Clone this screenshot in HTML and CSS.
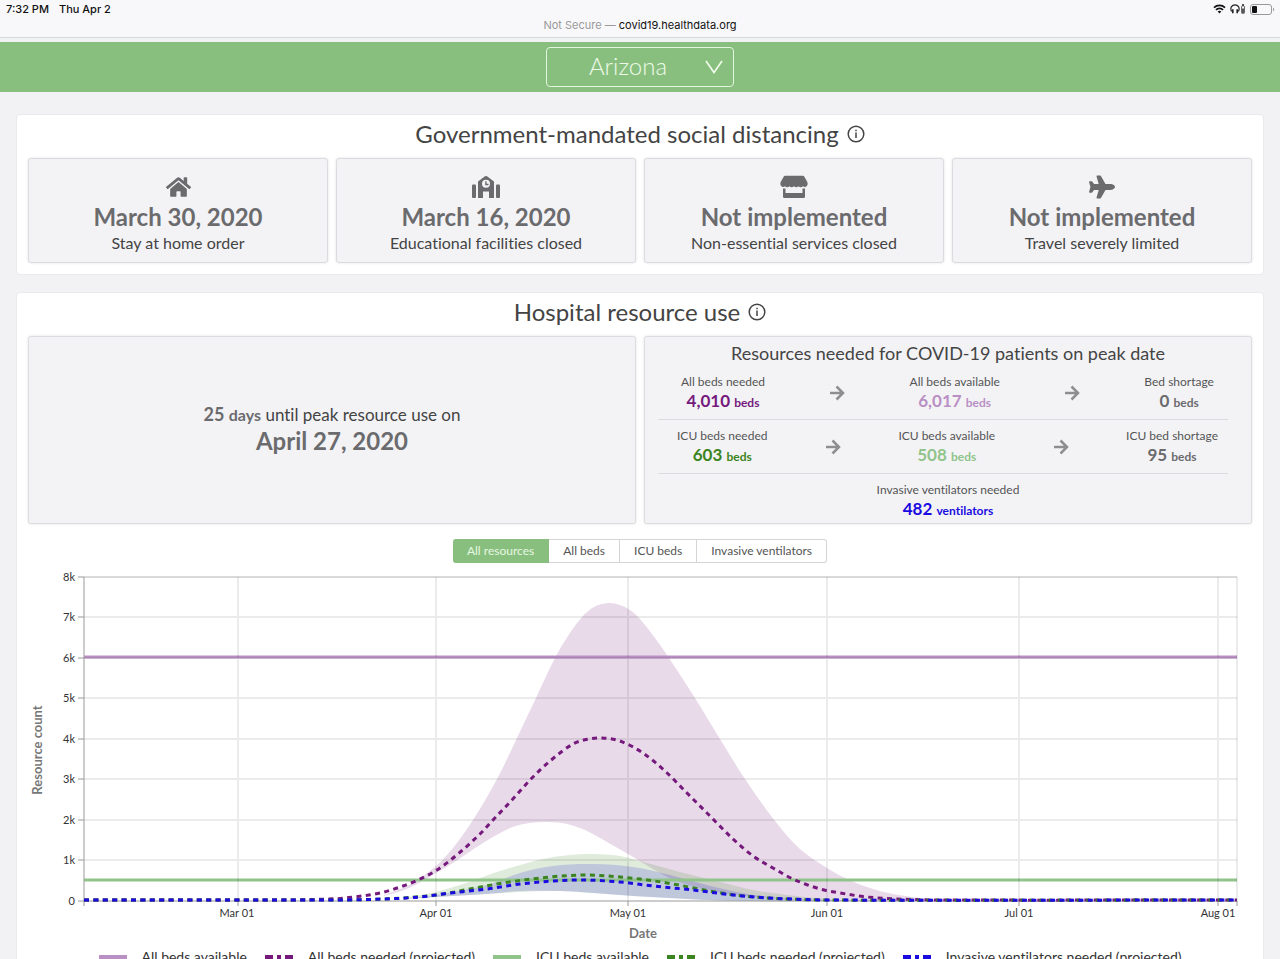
FILE: index.html
```
<!DOCTYPE html>
<html lang="en">
<head>
  <meta charset="UTF-8">
  <meta name="viewport" content="width=device-width, initial-scale=1.0">
  <title>COVID-19 Projections</title>
  <link rel="stylesheet" href="styles.css">
</head>
<body>

  <!-- Status bar -->
  <div class="status">
    <div class="status-row">
      <div class="clock"><span>7:32 PM</span><span>Thu Apr 2</span></div>
      <div class="status-icons">
        <svg width="13" height="10" viewBox="0 0 13 10" fill="none" stroke="#111" stroke-width="1.8">
          <path d="M1 3.6a8 8 0 0 1 11 0M3 5.9a5 5 0 0 1 7 0"/>
          <path d="M4.7 7.6a2.6 2.6 0 0 1 3.6 0L6.5 9.6z" fill="#111" stroke="none"/>
        </svg>
        <svg width="16" height="10" viewBox="0 0 16 10" fill="none" stroke="#222">
          <path d="M1.6 7.5C-.4 3.5 2.2 .8 5 .8s5.4 2.7 3.4 6.7" stroke-width="1.2"/>
          <path d="M2.8 5.2v4M7.2 5.2v4" stroke-width="1.6"/>
          <rect x="11.5" y="2" width="3" height="7.5" rx=".8" stroke="#666"/>
          <path d="M13 4.5v4.5M12 1h2" stroke-width="1.5"/>
        </svg>
        <svg width="25" height="11" viewBox="0 0 25 11">
          <rect x=".5" y=".5" width="21" height="10" rx="2.5" fill="none" stroke="#999"/>
          <rect x="2" y="2" width="5" height="7" rx="1" fill="#111"/>
          <path d="M23 3.5c1.5.6 1.5 3.4 0 4z" fill="#999"/>
        </svg>
      </div>
    </div>
    <div class="address"><span>Not Secure —</span> covid19.healthdata.org</div>
  </div>

  <!-- Location picker -->
  <header class="location-bar">
    <div class="location">
      <select aria-label="Location">
        <option>Arizona</option>
      </select>
      <svg class="chevron" width="18" height="14" viewBox="0 0 18 14" fill="none" stroke="#eefbea" stroke-width="1.7">
        <path d="M1 1l8 11.5L17 1"/>
      </svg>
    </div>
  </header>

  <main>
    <section class="panel">
      <h2>Government-mandated social distancing
        <svg class="info" viewBox="0 0 18 18" fill="none" stroke="#444" stroke-width="1.5">
          <circle cx="9" cy="9" r="7.8"/><path d="M9 7.6v5.4M9 4.7v1.6"/>
        </svg>
      </h2>
      <div class="measures">
        <div class="card measure">
          <svg width="25" height="24" viewBox="0 0 576 512"><path d="M280.37 148.26L96 300.11V464a16 16 0 0 0 16 16l112.06-.29a16 16 0 0 0 15.92-16V368a16 16 0 0 1 16-16h64a16 16 0 0 1 16 16v95.64a16 16 0 0 0 16 16.05L464 480a16 16 0 0 0 16-16V300L295.67 148.26a12.19 12.19 0 0 0-15.3 0zM571.6 251.47L488 182.56V44.05a12 12 0 0 0-12-12h-56a12 12 0 0 0-12 12v72.61L318.47 43a48 48 0 0 0-61 0L4.34 251.47a12 12 0 0 0-1.6 16.9l25.5 31A12 12 0 0 0 45.15 301l235.22-193.74a12.19 12.19 0 0 1 15.3 0L530.9 301a12 12 0 0 0 16.9-1.6l25.5-31a12 12 0 0 0-1.7-16.93z"/></svg>
          <strong>March 30, 2020</strong>
          <p>Stay at home order</p>
        </div>
        <div class="card measure">
          <svg width="30" height="24" viewBox="0 0 30 24"><path fill-rule="evenodd" d="M7 23V6.5L14 1.3q1-.6 2 0L23 6.5V23h-5v-6.5h-6V23zM15 4.8a4 4 0 1 0 0 8 4 4 0 0 0 0-8zM14.2 6.3h1.4v2.5h1.9v1.4h-3.3z"/><rect x="1" y="9.5" width="4" height="13.5" rx="1"/><rect x="25" y="9.5" width="4" height="13.5" rx="1"/></svg>
          <strong>March 16, 2020</strong>
          <p>Educational facilities closed</p>
        </div>
        <div class="card measure">
          <svg width="28" height="24" viewBox="0 0 28 24"><path d="M5 .8h18q.8 0 1.2.7l3 5.3c1 2.2.2 4.8-2 5.2q-1.400.2-2.200-.8-1 1-2.300 1t-2.200-1q-1 1-2.200 1t-2.300-1q-1 1-2.300 1t-2.200-1q-1 1-2.200 1t-2.300-1q-.8 1-2.200.8C.6 11.600-.2 9 .8 6.800l3-5.300Q4.2.8 5 .8z"/><path d="M3 13.500h2.500V18h17v-4.500H25v8.300q0 1.200-1.200 1.200H4.200Q3 23 3 21.800z"/></svg>
          <strong>Not implemented</strong>
          <p>Non-essential services closed</p>
        </div>
        <div class="card measure">
          <svg width="26" height="24" viewBox="0 0 576 512"><path d="M480 192H365.71L260.61 8.06A16.014 16.014 0 0 0 246.71 0h-65.5c-10.63 0-18.3 10.17-15.38 20.39L214.86 192H112l-43.2-57.6c-3.02-4.03-7.77-6.4-12.8-6.4H16.01C5.6 128-2.04 137.78.49 147.88L32 256 .49 364.12C-2.04 374.22 5.6 384 16.01 384H56c5.04 0 9.78-2.37 12.8-6.4L112 320h102.86l-49.03 171.6c-2.92 10.22 4.75 20.4 15.38 20.4h65.5c5.74 0 11.04-3.08 13.89-8.06L365.71 320H480c35.35 0 96-28.65 96-64s-60.65-64-96-64z"/></svg>
          <strong>Not implemented</strong>
          <p>Travel severely limited</p>
        </div>
      </div>
    </section>

    <section class="panel">
      <h2>Hospital resource use
        <svg class="info" viewBox="0 0 18 18" fill="none" stroke="#444" stroke-width="1.5">
          <circle cx="9" cy="9" r="7.8"/><path d="M9 7.6v5.4M9 4.7v1.6"/>
        </svg>
      </h2>
      <div class="summary">
        <div class="card peak">
          <p><b>25 <small>days</small></b> until peak resource use on</p>
          <strong>April 27, 2020</strong>
        </div>
        <div class="card resources">
          <h3>Resources needed for COVID-19 patients on peak date</h3>
          <div class="row beds">
            <div class="stat all-needed"><span>All beds needed</span><b>4,010 <small>beds</small></b></div>
            <svg class="arrow" viewBox="0 0 16 16"><path d="M1 8h13M7.5 1.5L14 8l-6.5 6.5"/></svg>
            <div class="stat all-available"><span>All beds available</span><b>6,017 <small>beds</small></b></div>
            <svg class="arrow" viewBox="0 0 16 16"><path d="M1 8h13M7.5 1.5L14 8l-6.5 6.5"/></svg>
            <div class="stat shortage"><span>Bed shortage</span><b>0 <small>beds</small></b></div>
          </div>
          <div class="row icu">
            <div class="stat icu-needed"><span>ICU beds needed</span><b>603 <small>beds</small></b></div>
            <svg class="arrow" viewBox="0 0 16 16"><path d="M1 8h13M7.5 1.5L14 8l-6.5 6.5"/></svg>
            <div class="stat icu-available"><span>ICU beds available</span><b>508 <small>beds</small></b></div>
            <svg class="arrow" viewBox="0 0 16 16"><path d="M1 8h13M7.5 1.5L14 8l-6.5 6.5"/></svg>
            <div class="stat shortage"><span>ICU bed shortage</span><b>95 <small>beds</small></b></div>
          </div>
          <div class="row vents">
            <div class="stat vent-needed"><span>Invasive ventilators needed</span><b>482 <small>ventilators</small></b></div>
          </div>
        </div>
      </div>

      <div class="tabs">
        <button type="button" class="active">All resources</button>
        <button type="button">All beds</button>
        <button type="button">ICU beds</button>
        <button type="button">Invasive ventilators</button>
      </div>

      <svg class="chart" viewBox="0 0 1224 376">
        <g transform="translate(56 10)">
          <g id="bands"></g>
          <g id="lines"></g>
          <path class="grid" d="M0 40h1153M0 81h1153M0 121h1153M0 162h1153M0 202h1153M0 243h1153M0 283h1153M154 0v324M352 0v324M544 0v324M743 0v324M935 0v324M1134 0v324"/>
          <path class="edge top" d="M0 0H1153"/>
          <path class="edge" d="M1153 0V324"/>
          <path class="axis" d="M-6 0H0M-6 40H0M-6 81H0M-6 121H0M-6 162H0M-6 202H0M-6 243H0M-6 283H0M-6 324H1153M0 0V329M154 324v5M352 324v5M544 324v5M743 324v5M935 324v5M1134 324v5M1153 324v5"/>
          <g id="projections"></g>
          <g class="tick y">
            <text x="-9" y="4">8k</text>
            <text x="-9" y="44">7k</text>
            <text x="-9" y="85">6k</text>
            <text x="-9" y="125">5k</text>
            <text x="-9" y="166">4k</text>
            <text x="-9" y="206">3k</text>
            <text x="-9" y="247">2k</text>
            <text x="-9" y="287">1k</text>
            <text x="-9" y="328">0</text>
          </g>
          <g class="tick">
            <text x="153" y="340">Mar 01</text>
            <text x="352" y="340">Apr 01</text>
            <text x="544" y="340">May 01</text>
            <text x="743" y="340">Jun 01</text>
            <text x="935" y="340">Jul 01</text>
            <text x="1134" y="340">Aug 01</text>
          </g>
          <text class="label" x="559" y="361">Date</text>
          <text class="label" transform="translate(-42 173) rotate(-90)">Resource count</text>
        </g>
      </svg>

      <ul class="legend">
        <li><i class="all-available"></i>All beds available</li>
        <li><i class="all-needed dashed"></i>All beds needed (projected)</li>
        <li><i class="icu-available"></i>ICU beds available</li>
        <li><i class="icu-needed dashed"></i>ICU beds needed (projected)</li>
        <li><i class="vent-needed dashed"></i>Invasive ventilators needed (projected)</li>
      </ul>
    </section>
  </main>

  <script>
    // Points are in plot units: 1153 wide, 324 high, y grows downwards
    const allUpper = [[300,318],[325,308],[352,289],[369,271],[389,243],[413,202],[433,161],[452,121],[471,81],[484,59],[498,40],[510,30],[524,26],[536,28],[546,33],[556,42],[571,61],[585,81],[611,121],[636,162],[661,202],[691,244],[716,272],[743,291],[763,302],[786,311],[809,317],[846,322],[880,324]];
    const allLower = [[300,319],[325,311],[352,296],[369,286],[396,268],[426,251],[446,246],[464,245],[483,247],[503,254],[523,265],[544,277],[569,292],[590,303],[620,312],[660,319],[743,324],[880,324]];
    const icuUpper = [[320,321],[352,315],[385,305],[416,294],[459,282],[486,278],[509,277],[536,279],[563,286],[596,295],[636,305],[669,313],[703,318],[756,323],[800,324]];
    const icuLower = [[320,322],[352,320],[403,317],[436,315],[476,314],[509,316],[549,319],[603,322],[656,324],[800,324]];
    const ventUpper = [[320,322],[352,318],[403,308],[436,296],[469,289],[509,287],[549,290],[586,298],[619,307],[653,315],[686,320],[736,323],[800,324]];
    const ventLower = [[320,322],[352,320],[403,317],[436,314],[476,314],[509,316],[549,319],[603,322],[656,324],[800,324]];

    const allMean = [[0,323],[200,323],[245,322],[261,321],[296,316],[319,309],[336,302],[353,293],[374,277],[396,257],[409,243],[428,223],[446,203],[466,184],[489,167],[505,162],[518,161],[536,164],[559,176],[581,194],[602,215],[623,236],[648,261],[669,279],[689,291],[709,302],[736,312],[756,316],[783,320],[813,322],[856,323],[1153,323]];
    const icuMean = [[0,323],[250,323],[300,322],[352,318],[386,312],[419,306],[456,301],[496,298],[523,299],[556,302],[589,307],[626,314],[669,320],[743,323],[1153,323]];
    const ventMean = [[0,323],[250,323],[300,322],[336,320],[366,316],[403,312],[436,307],[469,304],[499,303],[536,305],[569,309],[609,313],[649,318],[686,321],[743,323],[1153,323]];

    // Smooth curve through the points
    function curve(pts) {
      let d = "";
      for (let i = 0; i < pts.length - 1; i++) {
        const p0 = pts[i - 1] || pts[i];
        const p1 = pts[i];
        const p2 = pts[i + 1];
        const p3 = pts[i + 2] || p2;
        const dx = (p2[0] - p1[0]) / 3;
        const m1 = (p2[1] - p0[1]) / (p2[0] - p0[0]);
        const m2 = (p3[1] - p1[1]) / (p3[0] - p1[0]);
        d += `C${p1[0] + dx} ${p1[1] + m1 * dx} ${p2[0] - dx} ${p2[1] - m2 * dx} ${p2[0]} ${p2[1]}`;
      }
      return d;
    }

    function addPath(parent, cls, d) {
      const path = document.createElementNS("http://www.w3.org/2000/svg", "path");
      path.setAttribute("class", cls);
      path.setAttribute("d", d);
      document.getElementById(parent).appendChild(path);
    }

    function addBand(cls, upper, lower) {
      // both shapes close on the axis, even-odd fill keeps the area between them
      const end = upper[upper.length - 1];
      addPath("bands", cls, `M${upper[0]}${curve(upper)}L${end[0]} 330H${upper[0][0]}Z M${lower[0]}${curve(lower)}L${end[0]} 330H${lower[0][0]}Z`);
    }

    addBand("band all-needed", allUpper, allLower);
    addBand("band icu-needed", icuUpper, icuLower);
    addBand("band vent-needed", ventUpper, ventLower);

    addPath("lines", "line all-available", "M0 80H1153");
    addPath("lines", "line icu-available", "M0 303H1153");

    addPath("projections", "line dash all-needed", `M${allMean[0]}${curve(allMean)}`);
    addPath("projections", "line dash icu-needed", `M${icuMean[0]}${curve(icuMean)}`);
    addPath("projections", "line dash vent-needed", `M${ventMean[0]}${curve(ventMean)}`);
  </script>

</body>
</html>
```
FILE: styles.css
```
* { margin: 0; padding: 0; box-sizing: border-box; }
body { background: #f2f2f5; color: #444; font-family: Lato, "Open Sans", sans-serif; font-variant-ligatures: none; }

/* Resource colors */
.all-needed { color: #751a7c; }
.all-available { color: #b98fc4; }
.icu-needed { color: #3b8420; }
.icu-available { color: #91c48b; }
.vent-needed { color: #1b0be0; }
.shortage { color: #6b6b6e; }

/* Status bar */
.status { height: 38px; background: #f8f8fa; border-bottom: 1px solid #d3dcd8; font: 11px/18px Inter, sans-serif; color: #111; }
.status-row { display: flex; justify-content: space-between; height: 18px; padding: 0 5px 0 6px; font-weight: 500; }
.clock { display: flex; gap: 10px; }
.status-icons { display: flex; align-items: center; gap: 4px; }
.address { text-align: center; line-height: 14px; }
.address span { color: #999; }

/* Location picker */
.location-bar { display: flex; justify-content: center; align-items: center; height: 50px; margin-top: 4px; background: #89bf7e; }
.location { position: relative; width: 188px; height: 40px; }
.location select {
  appearance: none;
  width: 100%;
  height: 100%;
  padding: 0 24px 4px 0;
  background: transparent;
  border: 1px solid #e2f5dd;
  border-radius: 4px;
  color: #eefbea;
  font: 300 24px Lato, sans-serif;
  text-align: center;
  text-align-last: center;
}
.chevron { position: absolute; right: 11px; top: 13px; pointer-events: none; }

main { display: flex; flex-direction: column; gap: 17px; padding: 22px 16px; }
.panel { padding: 0 11px 11px; background: white; border: 1px solid #eaeaec; border-radius: 4px; }
.panel h2 { display: flex; justify-content: center; align-items: center; gap: 8px; height: 43px; padding-bottom: 6px; font-size: 24px; font-weight: 400; line-height: 30px; }
.info { width: 18px; height: 18px; }
.card { background: #f3f3f6; border: 1px solid #dcdce0; border-radius: 3px; box-shadow: 0 0 3px #e2e2e5; }

/* Social distancing */
.measures { display: grid; grid-template-columns: repeat(4, 1fr); gap: 8px; }
.measure { display: flex; flex-direction: column; align-items: center; height: 105px; padding-top: 16px; }
.measure svg { fill: #6b6b6e; }
.measure strong, .peak strong { color: #6b6b6e; font-size: 24px; line-height: 28px; }
.measure strong { margin-top: 4px; }
.measure p { font-size: 16px; line-height: 24px; }

/* Peak date and resources */
.summary { display: grid; grid-template-columns: 1fr 1fr; gap: 8px; }
.peak { display: flex; flex-direction: column; justify-content: center; align-items: center; padding-bottom: 4px; }
.peak p { font-size: 17px; line-height: 24px; }
.peak b { color: #6b6b6e; font-size: 18px; }
.peak small { font-size: 16px; }
.resources { height: 188px; padding-top: 3px; }
.resources h3 { height: 26px; font-size: 18px; font-weight: 400; line-height: 26px; text-align: center; }
.row { display: flex; justify-content: space-between; align-items: center; height: 54px; margin: 0 23px 0 13px; border-bottom: 1px solid #dcdce0; }
.row.beds { padding: 0 14px 0 23px; }
.row.icu { padding: 0 10px 0 19px; }
.row.vents { justify-content: center; margin: 0; border: none; }
.stat { display: flex; flex-direction: column; align-items: center; }
.stat span { color: #555; font-size: 12px; line-height: 18px; }
.stat b { font-size: 17px; line-height: 20px; }
.stat small { font-size: 12px; }
.arrow { width: 16px; height: 16px; fill: none; stroke: #8e8e91; stroke-width: 2.5; }

/* Tabs */
.tabs { display: flex; justify-content: center; margin-top: 15px; }
.tabs button {
  height: 24px;
  padding: 0 14px 2px;
  background: white;
  border: 1px solid #d5d5d8;
  border-left: none;
  color: #555;
  font: 12px Lato, sans-serif;
}
.tabs button:first-child { border-radius: 3px 0 0 3px; }
.tabs button:last-child { border-radius: 0 3px 3px 0; }
.tabs .active { background: #89bf7e; border-color: #89bf7e; color: #e6f7e2; }

/* Chart */
.chart { display: block; width: 100%; margin-top: 4px; }
.grid { fill: none; stroke: #000; stroke-opacity: 0.08; stroke-width: 2; }
.edge { fill: none; stroke: #000; stroke-opacity: 0.08; stroke-width: 2; }
.edge.top { stroke-opacity: 0.15; }
.axis { fill: none; stroke: #999; }
.band { fill: currentColor; fill-rule: evenodd; fill-opacity: 0.16; }
.line { fill: none; stroke: currentColor; stroke-width: 3; }
.dash { stroke-dasharray: 5 4.4; }
.tick text { fill: #333; font-size: 11px; text-anchor: middle; }
.tick.y text { text-anchor: end; }
.label { fill: #777; font-size: 13px; font-weight: 700; text-anchor: middle; }

.legend { display: flex; justify-content: center; gap: 18px; margin-top: 4px; list-style: none; white-space: nowrap; }
.legend li { display: flex; align-items: center; gap: 15px; font-size: 14px; line-height: 20px; color: #333; }
.legend i { width: 28px; height: 4px; background: currentColor; }
.legend i.dashed { background: linear-gradient(90deg, currentColor 8px, transparent 8px 12px, currentColor 12px 16px, transparent 16px 20px, currentColor 20px); }
```
